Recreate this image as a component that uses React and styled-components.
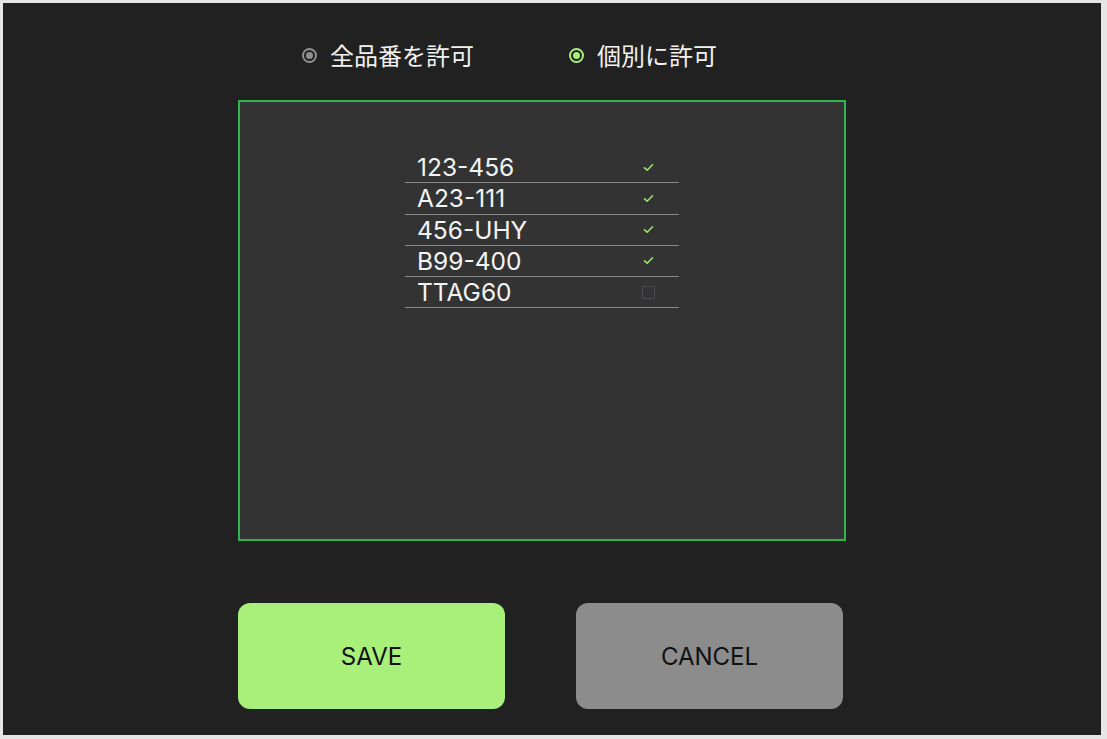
import React from "react";
import styled, { createGlobalStyle } from "styled-components";

const Global = createGlobalStyle`
  html, body { margin: 0; padding: 0; background: #e6e6e6; }
  body { font-family: Inter, "Noto Sans CJK JP", sans-serif; }
`;

const Frame = styled.div`
  width: 1107px;
  height: 739px;
  box-sizing: border-box;
  padding: 3px 6px 4px 3px;
  background: #e6e6e6;
`;

const Screen = styled.div`
  width: 100%;
  height: 100%;
  background: #212121;
  box-sizing: border-box;
  padding: 37px 0 0 235px;
  display: flex;
  flex-direction: column;
`;

const RadioRow = styled.div`
  display: flex;
  align-items: center;
  height: 30px;
  padding-left: 64px;
  gap: 95px;
`;

const RadioItem = styled.label`
  display: flex;
  align-items: center;
  gap: 13px;
  color: #f2f2f2;
  font-family: "Noto Sans CJK JP", sans-serif;
  font-size: 24px;
  line-height: 30px;
`;

const Dot = styled.span`
  width: 15px;
  height: 15px;
  box-sizing: border-box;
  border-radius: 50%;
  border: 2px solid ${(p) => p.$color};
  display: flex;
  align-items: center;
  justify-content: center;
  &::after {
    content: "";
    width: 7px;
    height: 7px;
    border-radius: 50%;
    background: ${(p) => p.$color};
  }
`;

const Panel = styled.div`
  margin-top: 30px;
  width: 608px;
  height: 441px;
  box-sizing: border-box;
  border: 2px solid #2fb552;
  background: #333333;
  padding: 50px 0 0 165px;
`;

const List = styled.div`
  width: 274px;
  display: flex;
  flex-direction: column;
`;

const Row = styled.div`
  height: 31.25px;
  box-sizing: border-box;
  border-bottom: 1px solid #8a8a8a;
  display: flex;
  align-items: center;
  justify-content: space-between;
  padding: 0 24px 0 12px;
  color: #f4f4f4;
  font-family: Inter, sans-serif;
  font-size: 24.5px;
`;

const Box = styled.span`
  width: 13px;
  height: 13px;
  display: flex;
  align-items: center;
  justify-content: center;
  box-sizing: border-box;
  border: ${(p) => (p.$checked ? "none" : "1.5px solid #4a4a52")};
  border-radius: 1px;
`;

const ButtonRow = styled.div`
  margin-top: 62px;
  display: flex;
  gap: 71px;
`;

const Button = styled.button`
  width: 267px;
  height: 106px;
  border: none;
  border-radius: 12px;
  background: ${(p) => p.$bg};
  color: #111;
  font-family: Inter, sans-serif;
  font-size: 24px;
  cursor: pointer;
`;

const Check = () => (
  <svg width="11" height="9" viewBox="0 0 11 9">
    <path d="M1.5 4.8 L4.2 7.2 L9.5 1.8" fill="none" stroke="#9be46a" strokeWidth="1.6" strokeLinecap="round" strokeLinejoin="round" />
  </svg>
);

const items = [
  ["123-456", true],
  ["A23-111", true],
  ["456-UHY", true],
  ["B99-400", true],
  ["TTAG60", false],
];

export default function App() {
  return (
    <Frame>
      <Global />
      <Screen>
        <RadioRow>
          <RadioItem><Dot $color="#8f8f8f" />全品番を許可</RadioItem>
          <RadioItem><Dot $color="#a6f07a" />個別に許可</RadioItem>
        </RadioRow>
        <Panel>
          <List>
            {items.map(([name, checked]) => (
              <Row key={name}>
                <span>{name}</span>
                <Box $checked={checked}>{checked && <Check />}</Box>
              </Row>
            ))}
          </List>
        </Panel>
        <ButtonRow>
          <Button $bg="#a8f07a">SAVE</Button>
          <Button $bg="#8c8c8c">CANCEL</Button>
        </ButtonRow>
      </Screen>
    </Frame>
  );
}
